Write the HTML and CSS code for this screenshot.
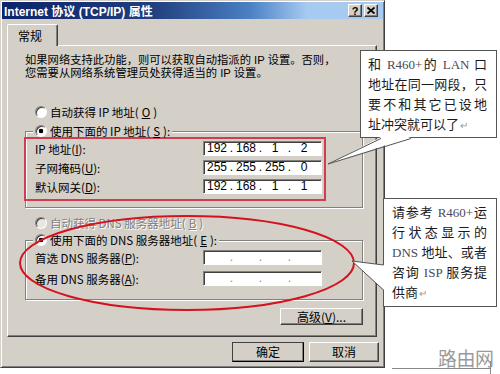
FILE: index.html
```html
<!DOCTYPE html>
<html lang="zh-CN">
<head>
    <meta charset="UTF-8">
    <meta name="viewport" content="width=device-width, initial-scale=1.0">
    <title>Internet 协议 (TCP/IP) 属性</title>
    <link rel="stylesheet" href="styles.css">
</head>
<body>
<div class="page">
    <div class="dialog">
        <div class="titlebar">
            <span class="title">Internet 协议 (TCP/IP) 属性</span>
            <span class="tb-btn">?</span>
            <span class="tb-btn"><svg width="8" height="7" viewBox="0 0 8 7"><path d="M0.5 0.5L7.5 6.5M7.5 0.5L0.5 6.5" stroke="#000" stroke-width="1.8"/></svg></span>
        </div>
        <div class="tabs">
            <div class="tab">常规</div>
        </div>
        <div class="panel">
            <p class="intro">如果网络支持此功能，则可以获取自动指派的 IP 设置。否则，<br>您需要从网络系统管理员处获得适当的 IP 设置。</p>

            <div class="opt first"><span class="radio"></span>自动获得 IP 地址(<u>O</u>)</div>
            <fieldset class="group ip">
                <legend class="legend"><span class="radio on"></span>使用下面的 IP 地址(<u>S</u>):</legend>
                <div class="mark">
                    <div class="row">
                        <label>IP 地址(<u>I</u>):</label>
                        <div class="ipbox"><span>192</span><i>.</i><span>168</span><i>.</i><span>1</span><i>.</i><span>2</span></div>
                    </div>
                    <div class="row">
                        <label>子网掩码(<u>U</u>):</label>
                        <div class="ipbox"><span>255</span><i>.</i><span>255</span><i>.</i><span>255</span><i>.</i><span>0</span></div>
                    </div>
                    <div class="row">
                        <label>默认网关(<u>D</u>):</label>
                        <div class="ipbox"><span>192</span><i>.</i><span>168</span><i>.</i><span>1</span><i>.</i><span>1</span></div>
                    </div>
                </div>
            </fieldset>

            <div class="opt off"><span class="radio"></span>自动获得 DNS 服务器地址(<u>B</u>)</div>
            <fieldset class="group dns">
                <legend class="legend"><span class="radio on"></span>使用下面的 DNS 服务器地址(<u>E</u>):</legend>
                <div class="row tall first-row">
                    <label>首选 DNS 服务器(<u>P</u>):</label>
                    <div class="ipbox empty"><span></span><i>.</i><span></span><i>.</i><span></span><i>.</i><span></span></div>
                </div>
                <div class="row tall">
                    <label>备用 DNS 服务器(<u>A</u>):</label>
                    <div class="ipbox empty"><span></span><i>.</i><span></span><i>.</i><span></span><i>.</i><span></span></div>
                </div>
            </fieldset>

            <div class="adv-wrap">
                <button class="btn adv">高级(<u>V</u>)...</button>
            </div>
        </div>
        <div class="actions">
            <button class="btn ok">确定</button>
            <button class="btn cancel">取消</button>
        </div>
    </div>

    <!-- 说明框 -->
    <div class="note note-lan">
        <div class="ln">和 <span class="en">R460+</span>的 <span class="en">LAN</span> 口</div>
        <div class="ln">地址在同一网段，只</div>
        <div class="ln">要不和其它已设地</div>
        <div class="ln last">址冲突就可以了<span class="ret">↵</span></div>
    </div>
    <div class="note note-dns">
        <div class="ln">请参考 <span class="en">R460+</span>运</div>
        <div class="ln">行状态显示的</div>
        <div class="ln"><span class="en">DNS</span> 地址、或者</div>
        <div class="ln">咨询 <span class="en">ISP</span> 服务提</div>
        <div class="ln last">供商<span class="ret">↵</span></div>
    </div>

    <svg class="marks" width="500" height="374" viewBox="0 0 500 374">
        <ellipse cx="187" cy="263" rx="167" ry="47" fill="none" stroke="#d4121e" stroke-width="2"/>
        <polygon points="381,137 411,137 328,164" fill="#fff"/>
        <polyline points="381,138.5 328,164 411,138.5" fill="none" stroke="#555"/>
        <polygon points="384,265 352,261 384,290" fill="#fff"/>
        <polyline points="383.5,265 352,261 383.5,290" fill="none" stroke="#555"/>
        <path d="M392 368.5H490M490.5 361V374" stroke="#888" fill="none"/>
    </svg>

    <div class="watermark">路由网</div>
</div>
</body>
</html>
```

FILE: styles.css
```css
body {
    margin: 0;
    background: #fff;
    font-family: "Noto Sans CJK SC", sans-serif;
}
.page {
    position: relative;
    width: 500px;
    height: 374px;
    overflow: hidden;
}

/* 对话框 */
.dialog {
    width: 385px;
    height: 368px;
    box-sizing: border-box;
    padding: 1px;
    background: #d4d0c8;
    border: 1px solid;
    border-color: #d4d0c8 #404040 #404040 #d4d0c8;
    box-shadow: inset 1px 1px #fff, inset -1px -1px #808080;
    font-size: 11.5px;
    color: #000;
}
.titlebar {
    height: 17px;
    display: flex;
    align-items: center;
    gap: 2px;
    padding: 0 5px 0 2px;
    background: linear-gradient(90deg, #0a246a 0%, #22407e 40%, #4a80c4 65%, #a6caf0 80%);
}
.title {
    flex: 1;
    color: #fff;
    font: bold 12px "Liberation Sans", "Noto Sans CJK SC", sans-serif;
    white-space: nowrap;
}
.tb-btn {
    width: 14px;
    height: 13px;
    box-sizing: border-box;
    display: flex;
    align-items: center;
    justify-content: center;
    background: #d4d0c8;
    border: 1px solid;
    border-color: #fff #404040 #404040 #fff;
    box-shadow: inset -1px -1px #808080;
    font: bold 11px "Liberation Sans", sans-serif;
    color: #000;
}

.tabs {
    display: flex;
    margin-top: 5px;
    padding-left: 5px;
}
.tab {
    position: relative;
    z-index: 1;
    width: 51px;
    height: 22px;
    box-sizing: border-box;
    margin-bottom: -1px;
    padding: 4px 0 0 10px;
    background: #d4d0c8;
    border: 1px solid;
    border-color: #fff #404040 transparent #fff;
    border-bottom: none;
    border-radius: 2px 2px 0 0;
    box-shadow: inset -1px 0 #808080;
    font-size: 12px;
    line-height: 14px;
}
.panel {
    width: 370px;
    height: 292px;
    box-sizing: border-box;
    margin-left: 5px;
    padding-top: 8px;
    border: 1px solid;
    border-color: #fff #404040 #404040 #fff;
    box-shadow: inset -1px -1px #808080;
}
.intro {
    margin: 0 0 0 17px;
    font-family: "Liberation Sans", "Noto Sans CJK SC", sans-serif;
    font-size: 11.3px;
    line-height: 12.7px;
    white-space: nowrap;
}

.opt {
    display: flex;
    align-items: center;
    gap: 3px;
    height: 12px;
    line-height: 12px;
    padding-left: 27px;
    white-space: nowrap;
}
.opt.first {
    margin-top: 27px;
}
.opt.off {
    margin-top: 9px;
    color: #808080;
    text-shadow: 1px 1px #fff;
}
.radio {
    flex: none;
    width: 12px;
    height: 12px;
    box-sizing: border-box;
    border-radius: 50%;
    border: 1px solid;
    border-color: #808080 #fff #fff #808080;
    background: #fff;
    box-shadow: inset 1px 1px #404040;
}
.radio.on {
    background: radial-gradient(circle, #000 0 2px, #fff 2.6px);
}
.opt.off .radio {
    background: #e8e6e2;
}

.group {
    width: 338px;
    box-sizing: border-box;
    margin: 7px 13px 0 17px;
    padding: 0 0 6px 0;
    border: 1px solid #808080;
    box-shadow: 1px 1px 0 #fff, inset 1px 1px 0 #fff;
}
.group.dns {
    margin-top: 5px;
    padding-bottom: 10px;
}
.legend {
    display: flex;
    align-items: center;
    gap: 3px;
    height: 12px;
    line-height: 12px;
    margin-left: 7px;
    padding: 0 2px;
    background: #d4d0c8;
    white-space: nowrap;
}

.mark {
    width: 302px;
    box-sizing: border-box;
    margin-left: -2px;
    padding-bottom: 3px;
    border: 2px solid #d23c50;
}
.row {
    display: flex;
    align-items: center;
    height: 19px;
    padding-left: 9px;
}
.row label {
    width: 168px;
    white-space: nowrap;
}
.row.tall {
    height: 21px;
}
.row.first-row {
    margin-top: 1px;
}
.ipbox {
    width: 119px;
    height: 15px;
    box-sizing: border-box;
    display: flex;
    align-items: center;
    padding-left: 1px;
    background: #fff;
    border: 1px solid;
    border-color: #808080 #fff #fff #808080;
    box-shadow: inset 1px 1px #404040;
    font: 12px "Liberation Sans", sans-serif;
    line-height: 13px;
}
.ipbox span {
    width: 24px;
    text-align: center;
}
.ipbox i {
    width: 5px;
    text-align: center;
    font-style: normal;
}
.ipbox.empty i {
    color: #888;
}

.btn {
    box-sizing: border-box;
    margin: 0;
    padding: 0;
    background: #d4d0c8;
    border: 1px solid;
    border-color: #fff #404040 #404040 #fff;
    box-shadow: inset -1px -1px #808080;
    font-family: "Noto Sans CJK SC", sans-serif;
    font-size: 12px;
    color: #000;
}
.adv-wrap {
    display: flex;
    justify-content: flex-end;
    width: 338px;
    margin: 8px 0 0 17px;
}
.btn.adv {
    width: 83px;
    height: 17px;
    line-height: 13px;
}
.actions {
    display: flex;
    justify-content: flex-end;
    gap: 5px;
    margin-top: 5px;
    padding-right: 4px;
}
.actions .btn {
    height: 20px;
    line-height: 16px;
}
.btn.ok {
    width: 72px;
    border-color: #404040 #000 #000 #404040;
}
.btn.cancel {
    width: 70px;
}

/* 标注 */
.note {
    position: absolute;
    box-sizing: border-box;
    background: #fff;
    border: 1px solid #555;
    padding: 4px 9px 0 7px;
    font: 13px "Liberation Serif", "Noto Sans CJK SC", serif;
    line-height: 20px;
    color: #1a1a1a;
}
.note .ln {
    white-space: nowrap;
    text-align: justify;
    text-align-last: justify;
}
.note .ln.last {
    text-align-last: left;
}
.note .en {
    color: #4a4a5a;
}
.note .ret {
    font-size: 10px;
    color: #999;
    margin-left: 1px;
}
.note-lan {
    left: 360px;
    top: 50px;
    width: 137px;
    height: 88px;
}
.note-dns {
    left: 383px;
    top: 198px;
    width: 114px;
    height: 109px;
    padding-left: 8px;
}
.marks {
    position: absolute;
    left: 0;
    top: 0;
    pointer-events: none;
}
.watermark {
    position: absolute;
    left: 438px;
    top: 347px;
    font: 19px "Noto Sans CJK SC", sans-serif;
    line-height: 22px;
    color: #9a9a9a;
    letter-spacing: -0.5px;
}
```
